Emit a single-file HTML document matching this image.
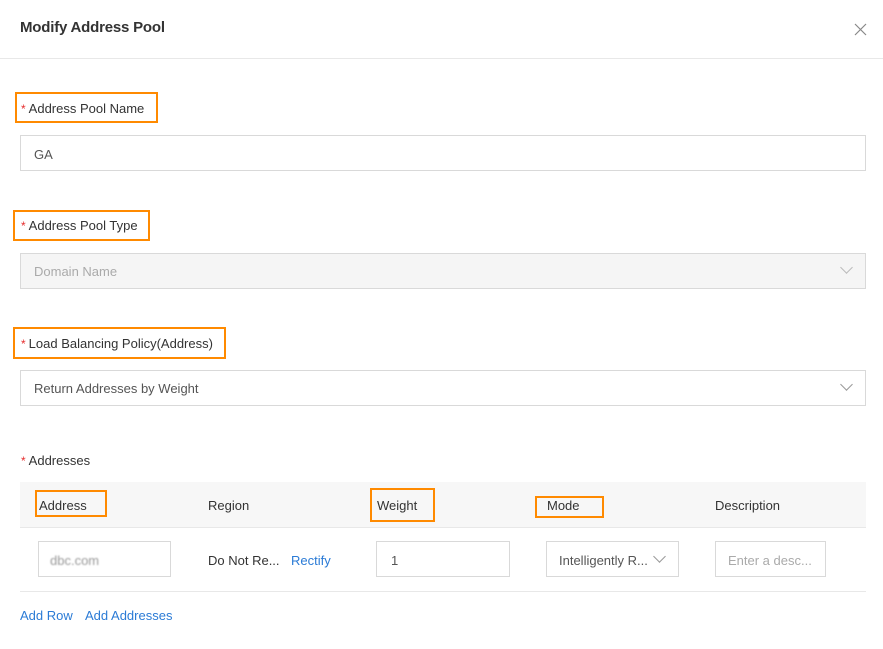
<!DOCTYPE html>
<html><head><style>
body{margin:0;width:883px;height:649px;background:#fff;font-family:"Liberation Sans",sans-serif;color:#333;position:relative;overflow:hidden}
.a{position:absolute}
.t{font-size:13px;white-space:nowrap}
.ob{position:absolute;border:2px solid #ff8a00;box-sizing:border-box}
.inp{position:absolute;border:1px solid #d9d9d9;box-sizing:border-box;background:#fff}
.st{color:#e62e2e;font-size:12px;margin-right:3px}
.chev{position:absolute;width:8px;height:8px;border-right:1px solid #999;border-bottom:1px solid #999;transform:rotate(45deg)}
</style></head><body>
<div class="a" style="left:20px;top:19px;font-size:15px;color:#333;font-weight:bold;letter-spacing:-0.2px">Modify Address Pool</div>
<svg class="a" style="left:854px;top:23px" width="13" height="13" viewBox="0 0 13 13"><path d="M1 1L12 12M12 1L1 12" stroke="#888" stroke-width="1.2" fill="none"/></svg>
<div class="a" style="left:0;top:58px;width:883px;height:1px;background:#e8e8e8"></div>

<div class="ob" style="left:15px;top:92px;width:143px;height:31px"></div>
<div class="a t" style="left:21px;top:101px"><span class="st">*</span>Address Pool Name</div>
<div class="inp" style="left:20px;top:135px;width:846px;height:36px"></div>
<div class="a t" style="left:34px;top:147px;color:#555">GA</div>

<div class="ob" style="left:13px;top:210px;width:137px;height:31px"></div>
<div class="a t" style="left:21px;top:218px"><span class="st">*</span>Address Pool Type</div>
<div class="inp" style="left:20px;top:253px;width:846px;height:36px;background:#f5f5f5"></div>
<div class="a t" style="left:34px;top:264px;color:#aaa">Domain Name</div>
<div class="chev" style="left:842px;top:263px;border-color:#bbb"></div>

<div class="ob" style="left:13px;top:327px;width:213px;height:32px"></div>
<div class="a t" style="left:21px;top:336px"><span class="st">*</span>Load Balancing Policy(Address)</div>
<div class="inp" style="left:20px;top:370px;width:846px;height:36px"></div>
<div class="a t" style="left:34px;top:381px;color:#555">Return Addresses by Weight</div>
<div class="chev" style="left:842px;top:380px"></div>

<div class="a t" style="left:21px;top:453px"><span class="st">*</span>Addresses</div>
<div class="a" style="left:20px;top:482px;width:846px;height:45px;background:#f7f7f7;border-bottom:1px solid #e8e8e8"></div>
<div class="a t" style="left:39px;top:498px">Address</div>
<div class="a t" style="left:208px;top:498px">Region</div>
<div class="a t" style="left:377px;top:498px">Weight</div>
<div class="a t" style="left:547px;top:498px">Mode</div>
<div class="a t" style="left:715px;top:498px">Description</div>
<div class="ob" style="left:35px;top:490px;width:72px;height:27px"></div>
<div class="ob" style="left:370px;top:488px;width:65px;height:34px"></div>
<div class="ob" style="left:535px;top:496px;width:69px;height:22px"></div>

<div class="inp" style="left:38px;top:541px;width:133px;height:36px"></div>
<div class="a t" style="left:50px;top:553px;color:#999;filter:blur(0.8px)">dbc.com</div>
<div class="a t" style="left:208px;top:553px">Do Not Re...</div>
<div class="a t" style="left:291px;top:553px;color:#2b7bd6">Rectify</div>
<div class="inp" style="left:376px;top:541px;width:134px;height:36px"></div>
<div class="a t" style="left:391px;top:553px;color:#555">1</div>
<div class="inp" style="left:546px;top:541px;width:133px;height:36px"></div>
<div class="a t" style="left:559px;top:553px;color:#555">Intelligently R...</div>
<div class="chev" style="left:655px;top:552px"></div>
<div class="inp" style="left:715px;top:541px;width:111px;height:36px"></div>
<div class="a t" style="left:728px;top:553px;color:#aaa">Enter a desc...</div>
<div class="a" style="left:20px;top:591px;width:846px;height:1px;background:#e8e8e8"></div>

<div class="a t" style="left:20px;top:608px;color:#2b7bd6">Add Row</div>
<div class="a t" style="left:85px;top:608px;color:#2b7bd6">Add Addresses</div>
</body></html>
